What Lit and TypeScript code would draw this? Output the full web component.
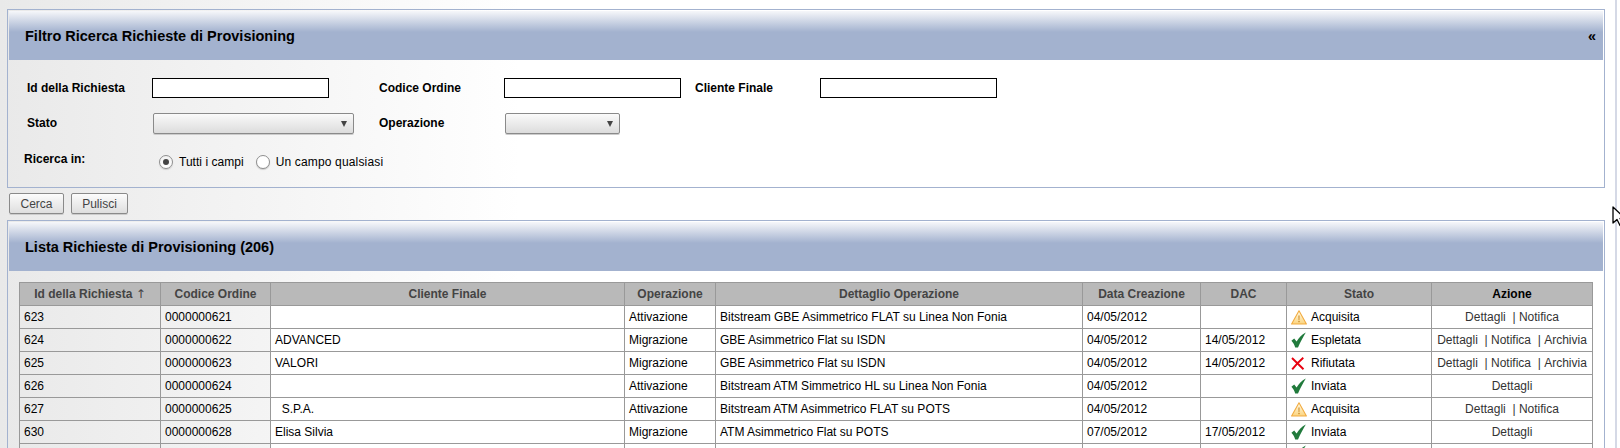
import { LitElement, html, css, svg } from "lit";
import { customElement } from "lit/decorators.js";

type Stato = "warn" | "ok" | "ko";
interface Row { id: string; code: string; client: string; op: string; detail: string; created: string; dac: string; stato: Stato; label: string; actions: string[]; }

const rows: Row[] = [
  { id: "623", code: "0000000621", client: "", op: "Attivazione", detail: "Bitstream GBE Asimmetrico FLAT su Linea Non Fonia", created: "04/05/2012", dac: "", stato: "warn", label: "Acquisita", actions: ["Dettagli", "Notifica"] },
  { id: "624", code: "0000000622", client: "ADVANCED", op: "Migrazione", detail: "GBE Asimmetrico Flat su ISDN", created: "04/05/2012", dac: "14/05/2012", stato: "ok", label: "Espletata", actions: ["Dettagli", "Notifica", "Archivia"] },
  { id: "625", code: "0000000623", client: "VALORI", op: "Migrazione", detail: "GBE Asimmetrico Flat su ISDN", created: "04/05/2012", dac: "14/05/2012", stato: "ko", label: "Rifiutata", actions: ["Dettagli", "Notifica", "Archivia"] },
  { id: "626", code: "0000000624", client: "", op: "Attivazione", detail: "Bitstream ATM Simmetrico HL su Linea Non Fonia", created: "04/05/2012", dac: "", stato: "ok", label: "Inviata", actions: ["Dettagli"] },
  { id: "627", code: "0000000625", client: "\u00a0 S.P.A.", op: "Attivazione", detail: "Bitstream ATM Asimmetrico FLAT su POTS", created: "04/05/2012", dac: "", stato: "warn", label: "Acquisita", actions: ["Dettagli", "Notifica"] },
  { id: "630", code: "0000000628", client: "Elisa Silvia", op: "Migrazione", detail: "ATM Asimmetrico Flat su POTS", created: "07/05/2012", dac: "17/05/2012", stato: "ok", label: "Inviata", actions: ["Dettagli"] },
];

const widths = [141, 110, 354, 91, 367, 118, 86, 145, 161];
const heads = ["Codice Ordine", "Cliente Finale", "Operazione", "Dettaglio Operazione", "Data Creazione", "DAC", "Stato"];

const icon = (s: Stato) => {
  if (s === "warn") return html`<svg class="ico" width="16" height="15" viewBox="0 0 16 15">
    <defs><linearGradient id="w" x1="0" y1="0" x2="0" y2="1"><stop offset="0" stop-color="#fffbe8"/><stop offset="1" stop-color="#fbd47e"/></linearGradient></defs>
    <path d="M8 .8 15.4 14H.6Z" fill="url(#w)" stroke="#f2ab40" stroke-width="1.1" stroke-linejoin="round"/>
    <path d="M7.4 5.500h1.200l-.2 4.500h-.8Z" fill="#c98a2c"/><rect x="7.3" y="10.800" width="1.400" height="1.400" fill="#c98a2c"/></svg>`;
  if (s === "ok") return html`<svg class="ico" width="16" height="16" viewBox="0 0 16 16">
    <path d="M.4 8.800 3.200 6.400 5.600 9.400C7.600 5.800 10.600 2.600 14.800.4 12.200 4.800 9.200 10 7 15.600H4.200C3.400 12.800 2.200 10.800.4 8.800Z" fill="#217a3c"/></svg>`;
  return html`<svg class="ico" width="16" height="13" viewBox="0 0 16 13">
    <path d="M1 1 12.500 12.300M12.300.7C8.600 3.800 4.600 8 1.200 12.400" fill="none" stroke="#e8000f" stroke-width="1.900"/></svg>`;
};

const cursor = svg`<path d="M1 1v16l4-3.500 3 6 3-1.500-3-5.500h5Z" fill="#fff" stroke="#000" stroke-width="1.300" stroke-linejoin="round"/>`;

@customElement("app-root")
export class AppRoot extends LitElement {
  static styles = css`
    :host { display: block; width: 1620px; height: 448px; overflow: hidden; position: relative; font-family: "Liberation Sans", Arial, sans-serif; font-size: 12px; color: #000; background: linear-gradient(to right, #e9e9e9, #fff 520px); }
    .page { display: flex; height: 448px; }
    .main { width: 1615px; flex: none; padding: 9px 10px 0 7px; box-sizing: border-box; }
    .strip { flex: 1; border-left: 2px solid #d5d9e6; }
    .panel { border: 1px solid #a3b2cf; padding: 1px; }
    .head { height: 49px; display: flex; align-items: center; justify-content: space-between; padding: 0 7px 0 16px; font-size: 14.5px; font-weight: bold; background: linear-gradient(to bottom, #f6f7fa, #a3b2cf 21px); }
    .filter .body { height: 126px; box-sizing: border-box; padding: 18px 0 0 18px; }
    .grid { display: grid; grid-template-columns: 125px 227px 125px 191px 125px 177px; grid-template-rows: 20px 21px 20px; row-gap: 15px; align-items: center; justify-items: start; font-weight: bold; font-size: 12px; }
    .grid input { width: 177px; height: 20px; box-sizing: border-box; border: 1px solid #000; background: #fff; padding: 0 2px; margin: 0; }
    .up { margin-top: -2px; }
    .sel { height: 21px; margin-left: 1px; box-sizing: border-box; border: 1px solid #8a8a8a; border-radius: 2px; background: linear-gradient(to bottom, #fafafa, #dcdcdc); display: flex; align-items: center; justify-content: flex-end; padding-right: 6px; box-shadow: 0 1px 0 #ccc; }
    .sel.w1 { width: 201px; }
    .sel.w2 { width: 115px; }
    .arrow { width: 0; height: 0; border-left: 3px solid transparent; border-right: 3px solid transparent; border-top: 6px solid #444; }
    .ric { margin: -1px 0 0 -3px; }
    .radios { grid-column: 2 / 5; display: flex; align-items: center; font-weight: normal; padding-left: 7px; margin-top: 5px; letter-spacing: 0.03px; }
    .radio { width: 14px; height: 14px; box-sizing: border-box; border: 1px solid #8f8f8f; border-radius: 50%; background: linear-gradient(to bottom, #f2f2f2, #fff); display: flex; align-items: center; justify-content: center; margin-right: 6px; box-shadow: 0 1px 1px #ccc; }
    .radio i { width: 6px; height: 6px; border-radius: 50%; background: #444; }
    .radio.off { background: #fff; }
    .radios .t1 { margin-right: 12px; }
    .radios .t2 { letter-spacing: 0.16px; }
    .btns { display: flex; gap: 7px; padding: 5px 0 0 2px; height: 32px; box-sizing: border-box; }
    button { height: 21px; margin: 0; padding: 0; box-sizing: border-box; border: 1px solid #8a8a8a; border-radius: 2px; background: linear-gradient(to bottom, #fcfcfc, #dedede); font: 12px "Liberation Sans", Arial, sans-serif; color: #444; box-shadow: 0 1px 0 #ccc; }
    .b1 { width: 55px; }
    .b2 { width: 57px; }
    .list { height: 400px; }
    table { table-layout: fixed; border-collapse: collapse; width: 1573px; margin: 11px 0 0 10px; }
    th, td { border: 1px solid #999; height: 23px; padding: 0 4px; box-sizing: border-box; overflow: hidden; white-space: nowrap; }
    th { background: #b9b9b9; color: #444; font-size: 12px; font-weight: bold; text-align: center; }
    th .sort { font-family: "DejaVu Sans", sans-serif; font-weight: normal; font-size: 12px; line-height: 10px; }
    th.az { color: #000; }
    td.wh { background: #fff; }
    .st { display: flex; align-items: center; height: 22px; }
    .st .ico { flex: none; margin: 0 4px 0 0; }
    .act { text-align: center; color: #333; }
    .cut { position: absolute; left: 1291px; top: 445px; }
    .cursor { position: absolute; left: 1612px; top: 206px; }
  `;

  render() {
    return html`
      <div class="page">
        <div class="main">
          <section class="panel filter">
            <div class="head"><span>Filtro Ricerca Richieste di Provisioning</span><span>«</span></div>
            <div class="body">
              <div class="grid">
                <label>Id della Richiesta</label><input type="text" />
                <label>Codice Ordine</label><input type="text" />
                <label>Cliente Finale</label><input type="text" />
                <label class="up">Stato</label><div class="sel w1"><span class="arrow"></span></div>
                <label class="up">Operazione</label><div class="sel w2"><span class="arrow"></span></div>
                <span></span><span></span>
                <label class="ric">Ricerca in:</label>
                <div class="radios">
                  <span class="radio"><i></i></span><span class="t1">Tutti i campi</span>
                  <span class="radio off"></span><span class="t2">Un campo qualsiasi</span>
                </div>
              </div>
            </div>
          </section>
          <div class="btns"><button class="b1">Cerca</button><button class="b2">Pulisci</button></div>
          <section class="panel list">
            <div class="head"><span>Lista Richieste di Provisioning (206)</span></div>
            <table>
              <colgroup>${widths.map((w) => html`<col style="width:${w}px" />`)}</colgroup>
              <thead><tr><th>Id della Richiesta <span class="sort">\u2191</span></th>${heads.map((h) => html`<th>${h}</th>`)}<th class="az">Azione</th></tr></thead>
              <tbody>
                ${rows.map((r) => html`<tr>
                  <td>${r.id}</td><td>${r.code}</td><td class="wh">${r.client}</td><td class="wh">${r.op}</td><td class="wh">${r.detail}</td><td class="wh">${r.created}</td><td class="wh">${r.dac}</td>
                  <td class="wh"><div class="st">${icon(r.stato)}<span>${r.label}</span></div></td>
                  <td class="wh act">${r.actions.map((a, i) => html`${i > 0 ? html` \u00a0|\u00a0` : ""}${a}`)}</td>
                </tr>`)}
                <tr>${widths.map((_, i) => html`<td class=${i > 1 ? "wh" : ""}></td>`)}</tr>
              </tbody>
            </table>
          </section>
        </div>
        <div class="strip"></div>
      </div>
      <div class="cut">${icon("ok")}</div>
      <svg class="cursor" width="14" height="22" viewBox="0 0 14 22">${cursor}</svg>
    `;
  }
}
